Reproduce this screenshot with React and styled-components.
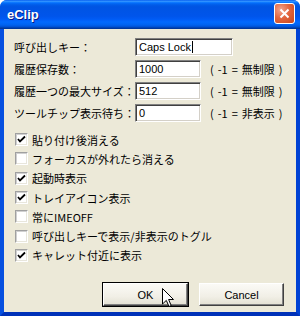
import React from 'react';
import styled, { createGlobalStyle } from 'styled-components';

const GlobalStyle = createGlobalStyle`
  html, body {
    margin: 0;
    padding: 0;
    background: #ffffff;
  }
`;

const Window = styled.div`
  position: relative;
  width: 300px;
  height: 316px;
  display: flex;
  flex-direction: column;
  box-sizing: border-box;
  overflow: hidden;
  border-radius: 7px 7px 0 0;
  background: #0054e3;
  font-family: "Noto Sans CJK JP", "Noto Sans", sans-serif;
`;

const TitleBar = styled.div`
  height: 29px;
  flex: none;
  display: flex;
  align-items: center;
  justify-content: space-between;
  padding: 0 5px 0 7px;
  box-sizing: border-box;
  background: linear-gradient(
    to bottom,
    #0058ee 0%, #3593ff 4%, #288eff 6%, #127dff 8%, #036ffc 10%,
    #0262ee 14%, #0057e5 20%, #0054e3 24%, #0055eb 56%, #005bf5 66%,
    #026afe 76%, #0062ef 86%, #0052d6 92%, #0040ab 96%, #003092 100%
  );
`;

const Title = styled.span`
  color: #ffffff;
  font-family: "Liberation Sans", Arial, sans-serif;
  font-weight: bold;
  font-size: 13px;
  text-shadow: 1px 1px 0 #0a1883;
  margin-top: -1px;
`;

const CloseButton = styled.div`
  width: 21px;
  height: 21px;
  box-sizing: border-box;
  border: 1px solid #ffffff;
  border-radius: 3px;
  background: radial-gradient(circle at 30% 30%, #f2a48e 0%, #e3663f 45%, #c7461b 100%);
  display: flex;
  align-items: center;
  justify-content: center;
  margin-top: -2px;
`;

const Body = styled.div`
  flex: 1;
  display: flex;
  flex-direction: column;
  background: #ece9d8;
  border-left: 4px solid #0650e0;
  border-right: 4px solid #0042d4;
  border-bottom: 4px solid #0031b8;
  padding: 9px 12px 6px 10px;
  box-sizing: border-box;
`;

const Form = styled.div`
  display: grid;
  grid-template-columns: 112px 66px auto;
  grid-auto-rows: 18px;
  row-gap: 4px;
  column-gap: 9px;
  align-items: center;
`;

const Label = styled.span`
  grid-column: 1;
  font-size: 11px;
  color: #000000;
  white-space: nowrap;
  line-height: 18px;
`;

const Field = styled.div`
  grid-column: ${(p) => (p.$wide ? '2 / 4' : '2')};
  width: ${(p) => (p.$wide ? '98px' : '66px')};
  height: 18px;
  box-sizing: border-box;
  background: #ffffff;
  border-top: 1px solid #808080;
  border-left: 1px solid #808080;
  border-bottom: 1px solid #ffffff;
  border-right: 1px solid #ffffff;
  box-shadow: inset 1px 1px 0 #404040, inset -1px -1px 0 #d4d0c8;
  display: flex;
  align-items: center;
  padding-left: 3px;
  font-family: "Liberation Sans", Arial, sans-serif;
  font-size: 11px;
  color: #000000;
`;

const Caret = styled.span`
  display: inline-block;
  width: 1px;
  height: 12px;
  background: #000000;
  margin-left: 1px;
`;

const Hint = styled.span`
  grid-column: 3;
  display: flex;
  align-items: center;
  gap: 4px;
  font-size: 11px;
  color: #000000;
  white-space: nowrap;
`;

const CheckList = styled.div`
  display: flex;
  flex-direction: column;
  margin-top: 8px;
`;

const CheckRow = styled.div`
  height: 19.3px;
  display: flex;
  align-items: center;
  gap: 4px;
  padding-left: 1px;
  font-size: 11px;
  color: #000000;
  white-space: nowrap;
`;

const Box = styled.span`
  width: 13px;
  height: 13px;
  flex: none;
  box-sizing: border-box;
  background: #ffffff;
  border-top: 1px solid #a0a0a0;
  border-left: 1px solid #a0a0a0;
  border-bottom: 1px solid #ffffff;
  border-right: 1px solid #ffffff;
  box-shadow: inset 1px 1px 0 #d0d0d0, inset -1px -1px 0 #e8e6dc;
  display: flex;
  align-items: center;
  justify-content: center;
`;

const ButtonRow = styled.div`
  margin-top: auto;
  display: flex;
  justify-content: flex-end;
  gap: 11px;
`;

const Button = styled.div`
  width: 85px;
  height: 23px;
  box-sizing: border-box;
  display: flex;
  align-items: center;
  justify-content: center;
  font-family: "Liberation Sans", Arial, sans-serif;
  font-size: 11px;
  color: #000000;
  background: linear-gradient(to bottom, #fbfaf6 0%, #f1efe6 60%, #e3e0d2 100%);
  border-top: 1px solid #ffffff;
  border-left: 1px solid #ffffff;
  border-bottom: 1px solid #404040;
  border-right: 1px solid #404040;
  box-shadow: ${(p) =>
    p.$default
      ? '0 0 0 1px #000000, inset -1px -1px 0 #808080'
      : 'inset -1px -1px 0 #808080'};
`;

const Pointer = styled.svg`
  position: absolute;
  left: 162px;
  top: 288px;
`;

const CheckMark = () => (
  <svg width="9" height="9" viewBox="0 0 9 9">
    <path d="M1 4 L3 6.5 L8 1.5" fill="none" stroke="#000" strokeWidth="1.8" />
  </svg>
);

const LimitHint = ({ text }) => (
  <Hint>
    <span>(</span>
    <span>-1</span>
    <span>=</span>
    <span>{text}</span>
    <span>)</span>
  </Hint>
);

const settings = [
  { label: '貼り付け後消える', checked: true },
  { label: 'フォーカスが外れたら消える', checked: false },
  { label: '起動時表示', checked: true },
  { label: 'トレイアイコン表示', checked: true },
  { label: '常にIMEOFF', checked: false },
  { label: '呼び出しキーで表示/非表示のトグル', checked: false },
  { label: 'キャレット付近に表示', checked: true },
];

const App = () => {
  return (
    <>
      <GlobalStyle />
      <Window>
        <TitleBar>
          <Title>eClip</Title>
          <CloseButton>
            <svg width="11" height="11" viewBox="0 0 11 11">
              <path d="M1.5 1.5 L9.5 9.5 M9.5 1.5 L1.5 9.5" stroke="#fff" strokeWidth="2" />
            </svg>
          </CloseButton>
        </TitleBar>
        <Body>
          <Form>
            <Label>呼び出しキー：</Label>
            <Field $wide>
              Caps Lock<Caret />
            </Field>

            <Label>履歴保存数：</Label>
            <Field>1000</Field>
            <LimitHint text="無制限" />

            <Label>履歴一つの最大サイズ：</Label>
            <Field>512</Field>
            <LimitHint text="無制限" />

            <Label>ツールチップ表示待ち：</Label>
            <Field>0</Field>
            <LimitHint text="非表示" />
          </Form>

          <CheckList>
            {settings.map((s) => (
              <CheckRow key={s.label}>
                <Box>{s.checked && <CheckMark />}</Box>
                {s.label}
              </CheckRow>
            ))}
          </CheckList>

          <ButtonRow>
            <Button $default>OK</Button>
            <Button>Cancel</Button>
          </ButtonRow>
        </Body>
        <Pointer width="13" height="20" viewBox="0 0 13 20">
          <path
            d="M0.5 0.5 L0.5 16 L4.3 12.4 L7 18.5 L9.2 17.5 L6.6 11.5 L11.5 11.5 Z"
            fill="#fff"
            stroke="#000"
            strokeWidth="1"
            strokeLinejoin="miter"
          />
        </Pointer>
      </Window>
    </>
  );
};

export default App;
